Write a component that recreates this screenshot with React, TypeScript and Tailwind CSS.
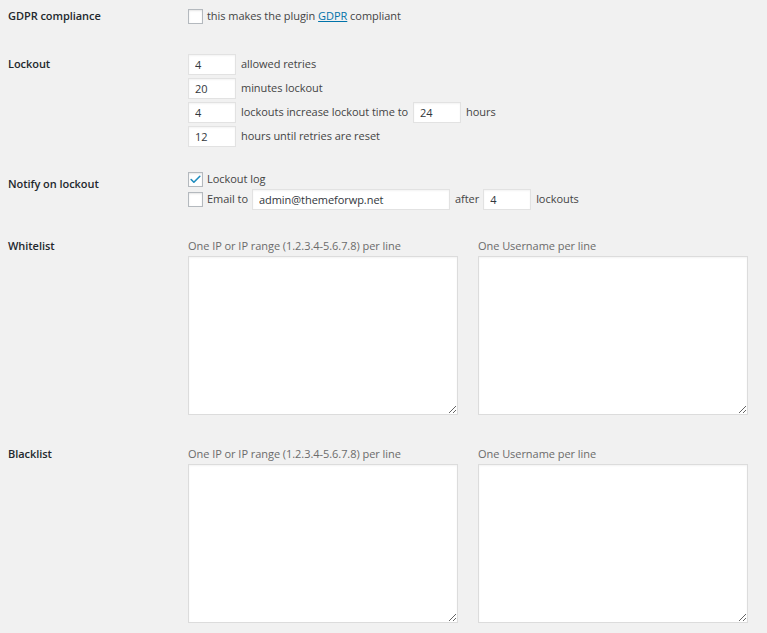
import { Check } from 'lucide-react'

const font = { fontFamily: '"Open Sans", "Noto Sans", sans-serif' }

function Box({ checked = false }: { checked?: boolean }) {
  return (
    <span className="flex h-[15px] w-[15px] shrink-0 items-center justify-center border border-[#b4b9be] bg-white shadow-[inset_0_1px_2px_rgba(0,0,0,0.1)]">
      {checked && <Check className="h-[13px] w-[13px] text-[#1e8cbe]" strokeWidth={3} />}
    </span>
  )
}

function Num({ value, w = 'w-[48px]' }: { value: string; w?: string }) {
  return (
    <input
      readOnly
      value={value}
      className={`${w} h-[21px] border border-[#e2e2e2] bg-white px-[6px] text-[11px] text-[#32373c] outline-none shadow-[inset_0_1px_2px_rgba(0,0,0,0.05)]`}
    />
  )
}

function Area() {
  return (
    <textarea
      readOnly
      className="block h-[159px] w-[270px] resize border border-[#dcdcdc] bg-white shadow-[inset_0_1px_2px_rgba(0,0,0,0.05)] outline-none"
    />
  )
}

function Label({ children, className = '' }: { children: React.ReactNode; className?: string }) {
  return (
    <div className={`w-[188px] shrink-0 pl-[8px] text-[11px] font-semibold leading-[20px] text-[#23282d] ${className}`}>
      {children}
    </div>
  )
}

function Lists() {
  return (
    <div className="flex gap-[20px]">
      <div>
        <p className="text-[11px] leading-[16px] text-[#6b6b6b]">One IP or IP range (1.2.3.4-5.6.7.8) per line</p>
        <div className="mt-[2px]">
          <Area />
        </div>
      </div>
      <div>
        <p className="text-[11px] leading-[16px] text-[#6b6b6b]">One Username per line</p>
        <div className="mt-[2px]">
          <Area />
        </div>
      </div>
    </div>
  )
}

export default function App() {
  return (
    <div className="h-[633px] w-full overflow-hidden bg-[#f1f1f1] text-[11px] tracking-[-0.05px] text-[#444]" style={font}>
      <div className="flex pt-[6px]">
        <Label>GDPR compliance</Label>
        <div className="flex h-[20px] items-center gap-[4px]">
          <Box />
          <span>
            this makes the plugin{' '}
            <a className="text-[#0073aa] underline">GDPR</a> compliant
          </span>
        </div>
      </div>

      <div className="mt-[28px] flex">
        <Label>Lockout</Label>
        <div className="flex flex-col gap-[3px]">
          <div className="flex items-center gap-[5px]">
            <Num value="4" />
            <span>allowed retries</span>
          </div>
          <div className="flex items-center gap-[5px]">
            <Num value="20" />
            <span>minutes lockout</span>
          </div>
          <div className="flex items-center gap-[5px]">
            <Num value="4" />
            <span>lockouts increase lockout time to</span>
            <Num value="24" />
            <span>hours</span>
          </div>
          <div className="flex items-center gap-[5px]">
            <Num value="12" />
            <span>hours until retries are reset</span>
          </div>
        </div>
      </div>

      <div className="mt-[24px] flex">
        <Label className="pt-[3px]">Notify on lockout</Label>
        <div className="flex flex-col gap-[1px]">
          <div className="flex h-[17px] items-center gap-[4px]">
            <Box checked />
            <span>Lockout log</span>
          </div>
          <div className="flex items-center gap-[4px]">
            <Box />
            <span>Email to</span>
            <Num value="admin@themeforwp.net" w="w-[198px]" />
            <span className="ml-[1px]">after</span>
            <Num value="4" />
            <span className="ml-[1px]">lockouts</span>
          </div>
        </div>
      </div>

      <div className="mt-[28px] flex">
        <Label className="-mt-[2px]">Whitelist</Label>
        <Lists />
      </div>

      <div className="mt-[31px] flex">
        <Label className="-mt-[2px]">Blacklist</Label>
        <Lists />
      </div>
    </div>
  )
}
